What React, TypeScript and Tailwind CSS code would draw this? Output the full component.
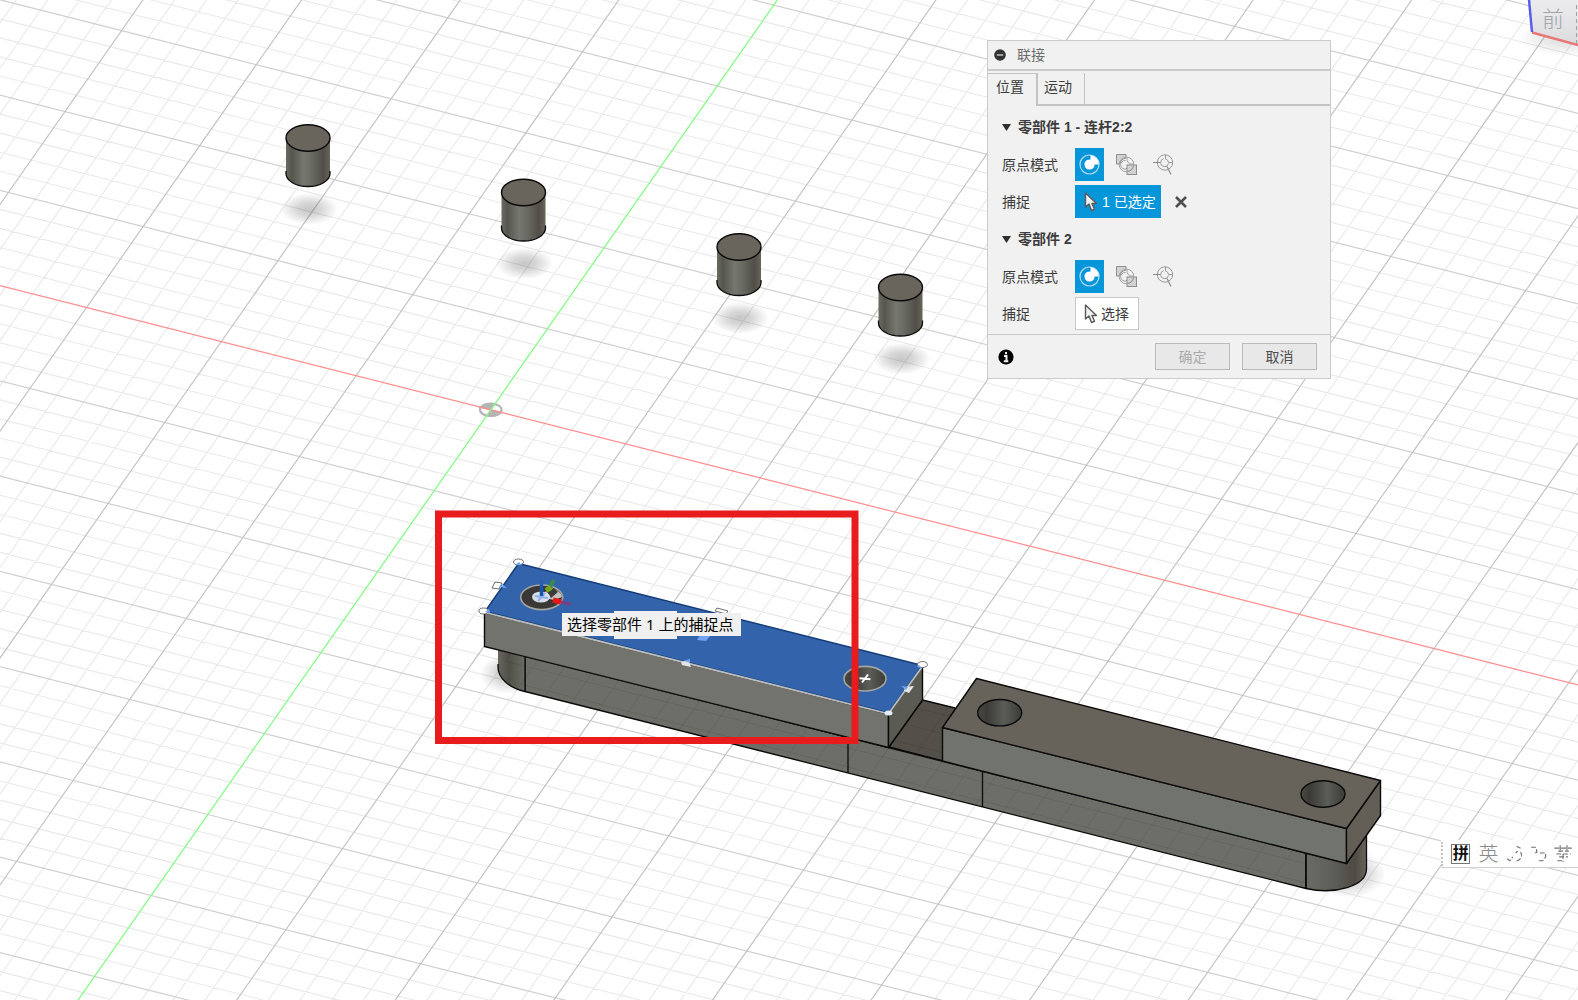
import { useState } from 'react';
import clsx from 'clsx';

type Point = [number, number];

const ORIGIN: Point = [490.8, 409.8];
// one major grid cell along the red and green axes, in screen space
const RED: Point = [134.75, 34.1];
const GREEN: Point = [-56.6, 80.95];

const range = (from: number, to: number) => Array.from({ length: to - from + 1 }, (_, i) => from + i);

function gridLine(offset: Point, dir: Point, step: number) {
  const x = ORIGIN[0] + (offset[0] * step) / 5;
  const y = ORIGIN[1] + (offset[1] * step) / 5;
  return `M${x - dir[0] * 20} ${y - dir[1] * 20}L${x + dir[0] * 20} ${y + dir[1] * 20}`;
}

const steps = range(-60, 60);
const isMajor = (n: number) => n % 5 === 0;
const minorLines = steps
  .filter(n => !isMajor(n))
  .map(n => gridLine(GREEN, RED, n) + gridLine(RED, GREEN, n))
  .join('');
const majorRed = steps.filter(n => isMajor(n) && n !== 0).map(n => gridLine(GREEN, RED, n)).join('');
const majorGreen = steps.filter(n => isMajor(n) && n !== 0).map(n => gridLine(RED, GREEN, n)).join('');

const PINS: Point[] = [
  [308, 138],
  [523.5, 192.5],
  [739, 247],
  [900.5, 287.5],
];

function Grid() {
  return (
    <g fill="none">
      <path d={minorLines} stroke="#e9e9e9" strokeWidth="1.1" />
      <path d={majorRed} stroke="#d0d0d0" strokeWidth="1.2" />
      <path d={majorGreen} stroke="#c4c4c4" strokeWidth="1.2" />
      <path d={gridLine(GREEN, RED, 0)} stroke="#ff8c8c" strokeWidth="1.2" />
      <path d={gridLine(RED, GREEN, 0)} stroke="#86fb86" strokeWidth="1.3" />
    </g>
  );
}

function Pin({ at: [x, y] }: { at: Point }) {
  return (
    <g transform={`translate(${x} ${y})`}>
      <ellipse cx="1" cy="71" rx="29" ry="16" fill="url(#shadow)" />
      <path d="M-22 0V35.500A22 13 0 0 0 22 35.500V0Z" fill="url(#steel)" />
      <path d="M-22 33V35.500A22 13 0 0 0 22 35.500V33" fill="none" stroke="#0a0a0a" strokeWidth="1.3" />
      <ellipse rx="22" ry="13.2" fill="#69655c" stroke="#0a0a0a" strokeWidth="1.4" />
    </g>
  );
}

function Scene() {
  return (
    <svg viewBox="0 0 1578 1000" preserveAspectRatio="xMinYMin slice" className="absolute inset-0 h-full w-full" aria-hidden="true">
      <defs>
        <linearGradient id="steel">
          <stop offset="0" stopColor="#6b6a61" />
          <stop offset="0.14" stopColor="#57564e" />
          <stop offset="0.4" stopColor="#757770" />
          <stop offset="0.55" stopColor="#6c6d66" />
          <stop offset="0.85" stopColor="#514e47" />
          <stop offset="1" stopColor="#69655c" />
        </linearGradient>
        <linearGradient id="bore">
          <stop offset="0" stopColor="#4b4943" />
          <stop offset="0.2" stopColor="#3b3a36" />
          <stop offset="0.6" stopColor="#5b5d57" />
          <stop offset="1" stopColor="#3c3b36" />
        </linearGradient>
        <linearGradient id="capLeft">
          <stop offset="0" stopColor="#68675f" />
          <stop offset="0.4" stopColor="#504f48" />
          <stop offset="1" stopColor="#6b6c65" />
        </linearGradient>
        <linearGradient id="capRight">
          <stop offset="0" stopColor="#6a6b64" />
          <stop offset="0.4" stopColor="#60605a" />
          <stop offset="0.8" stopColor="#4e4b44" />
          <stop offset="1" stopColor="#68645b" />
        </linearGradient>
        <radialGradient id="shadow">
          <stop offset="0" stopColor="#000" stopOpacity="0.22" />
          <stop offset="0.4" stopColor="#000" stopOpacity="0.16" />
          <stop offset="1" stopColor="#000" stopOpacity="0" />
        </radialGradient>
        <linearGradient id="cube" x2="0" y2="1">
          <stop offset="0" stopColor="#ececee" />
          <stop offset="1" stopColor="#dcdcde" />
        </linearGradient>
        <clipPath id="rail">
          <path d="M498 650L525 691L1306 888L1306 853L943 761L955 708L922 700L889 747L484 646Z" />
        </clipPath>
      </defs>

      <rect width="1578" height="1000" fill="#fff" />
      <Grid />

      {/* origin marker */}
      <g transform={`translate(${ORIGIN[0]} ${ORIGIN[1]})`}>
        <path d="M0 0L-11 -2.8A11 6.5 0 0 1 4.2 -6ZM0 0L11 2.8A11 6.5 0 0 1 -4.2 6Z" fill="#b5b5b5" />
        <ellipse rx="10.8" ry="6.2" fill="none" stroke="#b5b5b5" strokeWidth="2.2" />
        <path d="M-12 -3L12 3" stroke="#ff8c8c" strokeWidth="1.2" />
        <path d="M5 -7.2L-5 7.2" stroke="#86fb86" strokeWidth="1.3" />
      </g>

      {PINS.map(pin => (
        <Pin key={pin[0]} at={pin} />
      ))}

      {/* bottom rail */}
      <ellipse cx="508" cy="674" rx="28" ry="20" fill="url(#shadow)" />
      <ellipse cx="1350" cy="874" rx="36" ry="24" fill="url(#shadow)" />
      <g stroke="#0a0a0a" strokeWidth="1.3" strokeLinejoin="round">
        <path d="M889 747L922.5 700L955 708L943 761Z" fill="#544f48" />
        <path d="M525 656L1306 853V888.5L525 691.5Z" fill="#6d6e67" />
        <path d="M498 649V667C498 678 509 688 525 691.5V656Z" fill="url(#capLeft)" stroke="none" />
        <path d="M498 664V667C498 678 509 688 525 691.5V656" fill="none" />
        <path d="M1306 853V888.5C1335 895 1366.5 886 1366.5 869V835L1347 863Z" fill="url(#capRight)" />
        <path d="M848 738V773M982.5 772V807M1306 853V888" />
      </g>
      <g clipPath="url(#rail)" opacity="0.07">
        <path d={minorLines + majorRed + majorGreen} stroke="#000" fill="none" />
      </g>

      {/* right link */}
      <g stroke="#0a0a0a" strokeWidth="1.4" strokeLinejoin="round">
        <path d="M942.5 727.5L1346.5 828.5V863.5L942.5 761Z" fill="#71736d" />
        <path d="M1346.5 828.5L1380.5 780.5V815.5L1346.5 863.5Z" fill="#635f56" />
        <path d="M976.5 678.5L1380.5 780.5L1346.5 828.5L942.5 727.5Z" fill="#67625a" />
        <ellipse cx="999.7" cy="712.7" rx="22" ry="13.2" fill="url(#bore)" />
        <ellipse cx="1323" cy="794" rx="22" ry="13.2" fill="url(#bore)" />
      </g>

      {/* selected link */}
      <g stroke="#0a0a0a" strokeWidth="1.4" strokeLinejoin="round">
        <path d="M484.5 612.5L888.5 714V747.5L484.5 646.5Z" fill="#72736c" />
        <path d="M888.5 714L922.5 666V700L888.5 747.5Z" fill="#5b5a53" />
        <path d="M518.5 563.5L922.5 665.5L888.5 713L485 611.5Z" fill="#3364ab" stroke="#143c78" />
      </g>
      <path d="M485 612.5L888.5 713.8L922 667" fill="none" stroke="#bdbdbd" strokeWidth="1.8" />
      <g stroke="#a5a5a0" strokeWidth="1.6">
        <ellipse cx="541.7" cy="597.3" rx="21" ry="12.3" fill="#393836" />
        <ellipse cx="865" cy="678.7" rx="21" ry="12.3" fill="url(#bore)" />
      </g>
      <path d="M859.5 678.2L870.5 679.2M868 674.5L862 682.5" stroke="#fff" strokeWidth="2" />

      {/* joint origin glyph */}
      <path d="M541.5 597L549 587A20 11.5 0 0 1 562 597L554 600Z" fill="#c4c4c2" />
      <path d="M546 591L554 588L558 592L551 598Z" fill="#3d3c39" />
      <ellipse cx="541" cy="597" rx="9" ry="5.500" fill="#d9dde4" />
      <path d="M535 596L548 598M545 593L538 601" stroke="#8fb0ee" strokeWidth="2" />
      <path d="M541.5 596V585" stroke="#1757b4" strokeWidth="3.5" />
      <path d="M541.5 585V580" stroke="#2b5fb0" strokeWidth="3.5" />
      <path d="M549 589L554 580" stroke="#3b8a4c" strokeWidth="4" />
      <path d="M546 590.5L551 587.500" stroke="#76a81c" strokeWidth="5" />
      <path d="M553 600L561 602" stroke="#ed1616" strokeWidth="5" />
      <path d="M561 602L571 604.5" stroke="#7c3d80" strokeWidth="3" />

      {/* snap points */}
      <g fill="#fff" stroke="#6d6d6d" strokeWidth="1">
        <ellipse cx="518.5" cy="562" rx="5" ry="3" />
        <ellipse cx="483.5" cy="611" rx="4.500" ry="3" />
        <ellipse cx="922.5" cy="664.5" rx="5" ry="3" />
        <path d="M495 582L502 583L499 589L492 588Z" />
        <path d="M717 608L728 611L726 614L715 611Z" />
      </g>
      <ellipse cx="888.5" cy="713" rx="4" ry="2.5" fill="#e5eefc" />
      <path d="M515 565L519 562L522 565ZM485 612L489 609L490 613ZM919 665L922 668L917 667Z" fill="#75a6f5" />
      <path d="M502 584L507 588L499 587Z" fill="#75a6f5" />
      <path d="M681 662L688 660L691 667L682 665Z" fill="#e3e4e6" />
      <path d="M684 661L690 659V663Z" fill="#75a6f5" />
      <path d="M905 687L914 686L909 693L904 691Z" fill="#e3e4e6" />
      <path d="M901 686L908 687L906 690Z" fill="#75a6f5" />
      <path d="M700 635H711L706 641L697 640Z" fill="#72a0f2" />

      <rect x="438.5" y="514" width="416.5" height="226.5" fill="none" stroke="#e81c1c" strokeWidth="7" />

      {/* view cube */}
      <ellipse cx="1566" cy="38" rx="48" ry="18" fill="url(#shadow)" opacity="0.6" />
      <path d="M1529 0L1532 32.5L1578 45V0Z" fill="url(#cube)" />
      <path d="M1576.5 5V44" stroke="#a0a0a0" strokeDasharray="4 3" />
      <path d="M1532 32.5L1578 45" stroke="#e87878" strokeWidth="2.5" />
      <path d="M1529 0L1532 32" stroke="#5a5af0" strokeWidth="2.5" />
      <text x="1542" y="27" fill="#a2a4aa" className="font-['Noto_Sans_CJK_SC',sans-serif] text-[22px] font-light">
        前
      </text>
    </svg>
  );
}

function Cursor() {
  return (
    <svg width="14" height="20" viewBox="0 0 14 20" className="shrink-0">
      <path
        d="M1.5 1V15L5 12L7.500 18.500L10.500 17.300L8 11.500H12.500Z"
        fill="#f0f0f0"
        stroke="#5a5a5a"
        strokeWidth="1.4"
        strokeLinejoin="round"
      />
    </svg>
  );
}

function SimpleIcon() {
  return (
    <svg width="21" height="21" viewBox="0 0 21 21">
      <circle cx="10.5" cy="10.5" r="9.5" fill="none" stroke="#b5def3" strokeWidth="1.2" />
      <path d="M11.5 1.200A9.300 9.300 0 0 1 19.800 10.500H15.500A5 5 0 1 1 9 5.800L11.500 5.500Z" fill="#fff" />
    </svg>
  );
}

function BetweenIcon() {
  return (
    <svg width="21" height="21" viewBox="0 0 21 21" fill="none" stroke="#8e8e8e">
      <path d="M.5 .5H10V4A7 7 0 0 0 4 10H.5Z" fill="#d2d2d2" />
      <circle cx="10.5" cy="10.5" r="7.300" stroke="#a2a2a2" />
      <path d="M9.500 6.500A4.300 4.300 0 1 0 11 14.500" stroke="#a2a2a2" />
      <path d="M11 3.500V7.500A3 3 0 0 1 13.500 10H17.500" stroke="#a2a2a2" />
      <rect x="11" y="11" width="9.500" height="9.500" fill="#d2d2d2" />
      <path d="M11.500 17.500A7 7 0 0 0 17.500 11.500" />
    </svg>
  );
}

function IntersectIcon() {
  return (
    <svg width="21" height="21" viewBox="0 0 21 21" fill="none" stroke="#8a8a8a">
      <circle cx="12" cy="8.500" r="7.700" stroke="#999" />
      <path d="M12.500 1V5A4 4 0 0 1 15.500 8.500H19.500" stroke="#999" />
      <path d="M10.500 4.800A4 4 0 1 0 15.500 9.500" stroke="#999" />
      <path d="M0 8.500H7M14 12.500L18 20.500" strokeWidth="1.200" />
    </svg>
  );
}

const MODES = [
  { id: 'simple', title: '简单', Icon: SimpleIcon },
  { id: 'between', title: '两个面之间', Icon: BetweenIcon },
  { id: 'intersect', title: '两条边的交点', Icon: IntersectIcon },
];

function OriginMode() {
  const [mode, setMode] = useState('simple');
  return (
    <div className="flex h-[33px] items-center">
      <span className="w-[73px]">原点模式</span>
      <div className="flex h-full items-center gap-2">
        {MODES.map(({ id, title, Icon }) => (
          <button
            key={id}
            title={title}
            aria-pressed={mode === id}
            onClick={() => setMode(id)}
            className={clsx('flex h-full w-[29px] items-center justify-center', id === 'simple' && 'bg-[#0896db]')}
          >
            <Icon />
          </button>
        ))}
      </div>
    </div>
  );
}

function SectionTitle({ children }: { children: string }) {
  return (
    <h3 className="flex h-[42px] items-center gap-[7px] font-bold">
      <svg width="9" height="7" viewBox="0 0 9 7">
        <path d="M0 0H9L4.500 7Z" fill="#2e2e2e" />
      </svg>
      {children}
    </h3>
  );
}

function JointDialog() {
  const [tab, setTab] = useState('位置');
  return (
    <section
      aria-label="联接"
      className="absolute right-[247px] top-10 w-[344px] border border-[#cbcbcb] bg-[#f1f1f1] text-sm text-[#3c3c3c]"
    >
      <header className="flex h-[30px] items-center gap-[11px] border-b-2 border-[#cbcbcb] pl-[6px] text-[#6b6b6b]">
        <button title="折叠" className="flex">
          <svg width="12" height="12" viewBox="0 0 12 12">
            <circle cx="6" cy="6" r="5.800" fill="#333" />
            <path d="M2.800 6H9.200" stroke="#ccc" strokeWidth="1.400" />
          </svg>
        </button>
        <h2>联接</h2>
      </header>

      <div role="tablist" className="flex h-[35px] border-b-2 border-[#c3c3c3] pt-[2px]">
        {['位置', '运动'].map(name => (
          <button
            key={name}
            role="tab"
            aria-selected={tab === name}
            onClick={() => setTab(name)}
            className={clsx(
              'border-[#c3c3c3] pb-1 text-left',
              name === tab ? 'h-[33px] w-[50px] border-r-2 border-t bg-[#f1f1f1] pb-[6px] pl-2' : 'h-[31px] w-[47px] border-r pl-[6px]',
            )}
          >
            {name}
          </button>
        ))}
      </div>

      <div className="pb-1 pl-[14px]">
        <SectionTitle>零部件 1 - 连杆2:2</SectionTitle>
        <div className="flex flex-col gap-1">
          <OriginMode />
          <div className="flex h-[33px] items-center">
            <span className="w-[73px]">捕捉</span>
            <button className="flex h-full w-[86px] items-center gap-1 bg-[#0896db] pl-[9px] text-white">
              <Cursor />
              1 已选定
            </button>
            <button title="清除选择" className="ml-[14px] flex">
              <svg width="12" height="12" viewBox="0 0 12 12">
                <path d="M1 1L11 11M11 1L1 11" stroke="#505050" strokeWidth="2.600" />
              </svg>
            </button>
          </div>
        </div>

        <SectionTitle>零部件 2</SectionTitle>
        <div className="flex flex-col gap-1">
          <OriginMode />
          <div className="flex h-[33px] items-center">
            <span className="w-[73px]">捕捉</span>
            <button className="flex h-full w-16 items-center gap-[3px] border border-[#c9c9c9] bg-white pl-2">
              <Cursor />
              选择
            </button>
          </div>
        </div>
      </div>

      <footer className="flex h-11 items-center border-t border-[#c9c9c9] pl-[10px] pr-[13px]">
        <button title="信息" className="flex">
          <svg width="16" height="16" viewBox="0 0 16 16">
            <circle cx="8" cy="8" r="7.600" fill="#000" />
            <path d="M8 3V5.300M6 7H8.500V12M5.800 12.200H10.300" stroke="#eee" strokeWidth="2" fill="none" />
          </svg>
        </button>
        <div className="ml-auto flex gap-3">
          <button disabled className="h-[27px] w-[75px] border border-[#b9b9b9] bg-[#e8e8e8] text-[#ababab]">
            确定
          </button>
          <button className="h-[27px] w-[75px] border border-[#b9b9b9] bg-[#e8e8e8] text-[#4c4c4c]">取消</button>
        </div>
      </footer>
    </section>
  );
}

function ImeBar() {
  return (
    <div className="absolute right-0 top-[840px] flex h-7 w-[137px] items-center gap-2 border-b border-[#cfcfcf] bg-white">
      <div className="h-6 border-l-2 border-dotted border-[#c4c4c4]" />
      <button className="flex h-5 w-5 items-center justify-center border border-[#777] text-base leading-none font-bold text-[#111]">
        拼
      </button>
      <button className="text-xl leading-5 font-light text-[#8a8a8a]">英</button>
      <svg width="74" height="20" viewBox="0 0 74 20" fill="none" stroke="#707070" strokeWidth="1.200" strokeDasharray="5 2">
        <path d="M11 2L15 4M10 9L12 7M15 8C18 12 15 17 9 17.500M1 15L4 17L7 13" />
        <path d="M26 3H31L32 8L30 9M35 9H41V13L38 17H34" />
        <path d="M50 4H68M56 1V8M63 1V8M52 10H67M54 7H65M55 13H64M59 10V18M53 17H58" />
      </svg>
    </div>
  );
}

export default function App() {
  return (
    <main className="relative min-h-screen overflow-hidden bg-white font-['Liberation_Sans','Noto_Sans_CJK_SC',sans-serif]">
      <Scene />
      <div className="absolute left-[614px] top-[611px] h-7 w-[63px] bg-[#f0f0f0]" />
      <div
        role="tooltip"
        className="absolute left-[562px] top-[613px] bg-[#f0f0f0] pl-[5px] pr-2 font-['Noto_Sans','Noto_Sans_CJK_SC',sans-serif] text-[15px] leading-[23px] whitespace-nowrap text-black"
      >
        选择零部件 1 上的捕捉点
      </div>
      <JointDialog />
      <ImeBar />
    </main>
  );
}
